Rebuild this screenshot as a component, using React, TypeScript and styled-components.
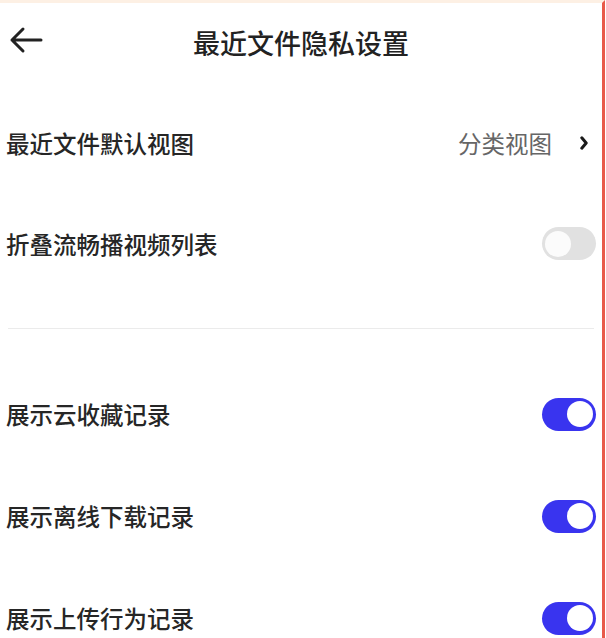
import React from "react";
import styled, { createGlobalStyle } from "styled-components";

const GlobalStyle = createGlobalStyle`
  body {
    margin: 0;
    background: #ffffff;
    font-family: "Noto Sans CJK SC", "Noto Sans", sans-serif;
    color: #222222;
  }
`;

const Frame = styled.div`
  width: 605px;
  height: 638px;
  overflow: hidden;
  box-sizing: border-box;
  border-top: 3px solid #fdf0e4;
  border-right: 3px solid #e85a4a;
  display: flex;
  flex-direction: column;
`;

const TopBar = styled.header`
  height: 78px;
  position: relative;
  display: flex;
  align-items: center;
  justify-content: center;
  flex-shrink: 0;
`;

const BackButton = styled.button`
  position: absolute;
  left: 9px;
  top: 23px;
  padding: 0;
  border: 0;
  background: none;
  display: flex;
`;

const Title = styled.h1`
  margin: 0;
  font-size: 27px;
  font-weight: 500;
  color: #222;
  line-height: 1;
`;

const List = styled.main`
  margin-top: 11px;
  display: flex;
  flex-direction: column;
`;

const Row = styled.div<{ $h: number }>`
  height: ${(p) => p.$h}px;
  display: flex;
  align-items: center;
  justify-content: space-between;
  padding: 0 6px 0 6px;
  flex-shrink: 0;
`;

const Label = styled.span`
  font-size: 23.5px;
  font-weight: 500;
  color: #262626;
`;

const Value = styled.div`
  display: flex;
  align-items: center;
  gap: 28px;
  font-size: 23.5px;
  color: #666666;
  padding-right: 8px;
`;

const Chevron = styled.svg`
  margin-top: 1px;
`;

const Divider = styled.hr`
  margin: 34px 8px 34px 8px;
  border: 0;
  height: 1px;
  background: #ebebeb;
`;

const Track = styled.span<{ $on: boolean }>`
  width: 54px;
  height: 33px;
  border-radius: 17px;
  background: ${(p) => (p.$on ? "#3934ef" : "#e1e1e1")};
  display: flex;
  align-items: center;
  justify-content: ${(p) => (p.$on ? "flex-end" : "flex-start")};
  padding: 0 3px;
  box-sizing: border-box;
`;

const Knob = styled.span<{ $on: boolean }>`
  width: 26px;
  height: 26px;
  border-radius: 50%;
  background: ${(p) => (p.$on ? "#ffffff" : "#fbfbfb")};
`;

const Toggle = ({ on }: { on: boolean }) => (
  <Track $on={on}>
    <Knob $on={on} />
  </Track>
);

const rows = [
  { label: "展示云收藏记录", on: true },
  { label: "展示离线下载记录", on: true },
  { label: "展示上传行为记录", on: true },
];

export default function App() {
  return (
    <>
      <GlobalStyle />
      <Frame>
        <TopBar>
          <BackButton>
            <svg width="34" height="28" viewBox="0 0 34 28" fill="none">
              <path
                d="M32 14H3M14 3L3 14L14 25"
                stroke="#222"
                strokeWidth="3"
                strokeLinecap="round"
                strokeLinejoin="round"
              />
            </svg>
          </BackButton>
          <Title>最近文件隐私设置</Title>
        </TopBar>
        <List>
          <Row $h={101}>
            <Label>最近文件默认视图</Label>
            <Value>
              分类视图
              <Chevron width="8" height="14" viewBox="0 0 8 14" fill="none">
                <path
                  d="M1.8 1.8L6.2 7L1.8 12.2"
                  stroke="#1a1a1a"
                  strokeWidth="3"
                  strokeLinecap="round"
                  strokeLinejoin="round"
                />
              </Chevron>
            </Value>
          </Row>
          <Row $h={101}>
            <Label>折叠流畅播视频列表</Label>
            <Toggle on={false} />
          </Row>
          <Divider />
          {rows.map((r) => (
            <Row key={r.label} $h={102}>
              <Label>{r.label}</Label>
              <Toggle on={r.on} />
            </Row>
          ))}
        </List>
      </Frame>
    </>
  );
}
